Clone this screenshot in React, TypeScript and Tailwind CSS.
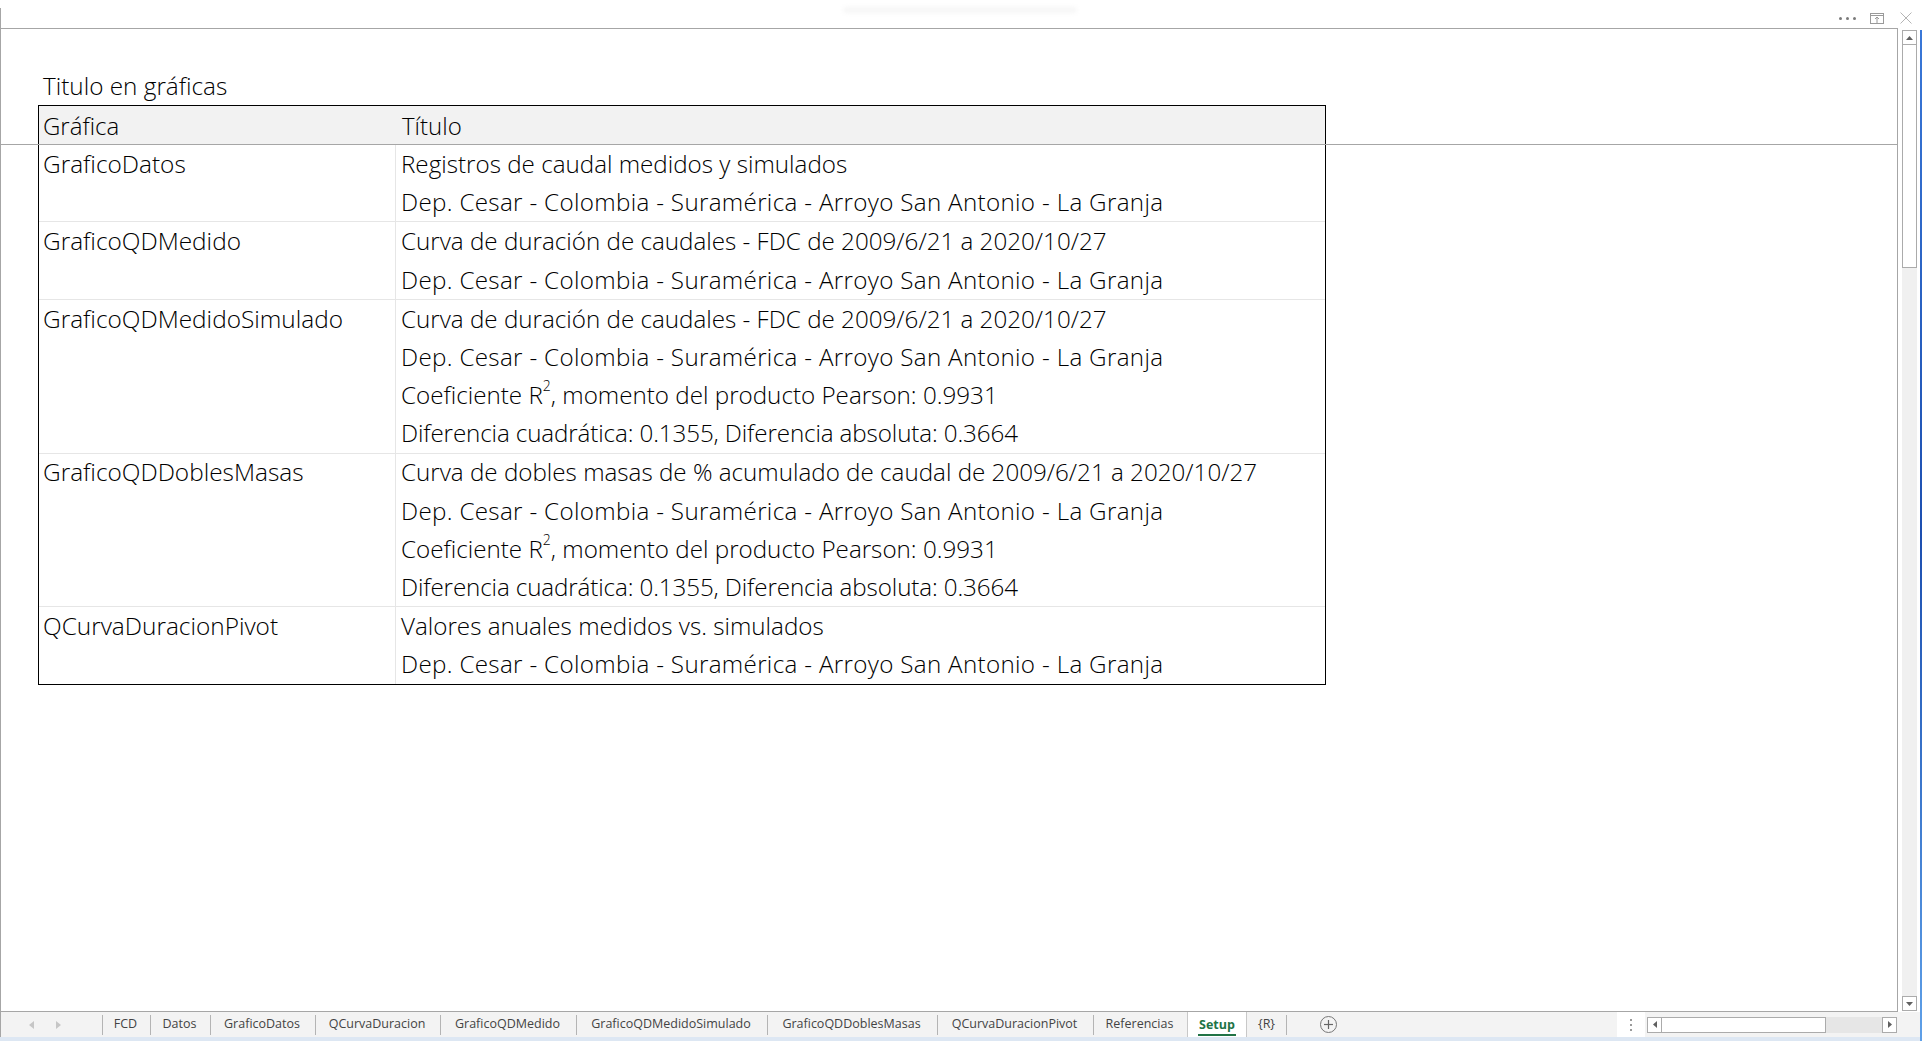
import React from "react";

const DEP = (
  <span className="tracking-[0.32px]">Dep. Cesar - Colombia - Suramérica - Arroyo San Antonio - La Granja</span>
);

const R2 = (
  <>
    Coeficiente R<sup className="text-[14px] top-[-9px]">2</sup>, momento del producto Pearson: 0.9931
  </>
);

const DIF = (
  <span className="tracking-[-0.12px]">Diferencia cuadrática: 0.1355, Diferencia absoluta: 0.3664</span>
);

const rows: { name: string; lines: React.ReactNode[] }[] = [
  { name: "GraficoDatos", lines: ["Registros de caudal medidos y simulados", DEP] },
  {
    name: "GraficoQDMedido",
    lines: ["Curva de duración de caudales - FDC de 2009/6/21 a 2020/10/27", DEP],
  },
  {
    name: "GraficoQDMedidoSimulado",
    lines: ["Curva de duración de caudales - FDC de 2009/6/21 a 2020/10/27", DEP, R2, DIF],
  },
  {
    name: "GraficoQDDoblesMasas",
    lines: [
      "Curva de dobles masas de % acumulado de caudal de 2009/6/21 a 2020/10/27",
      DEP,
      R2,
      DIF,
    ],
  },
  { name: "QCurvaDuracionPivot", lines: ["Valores anuales medidos vs. simulados", DEP] },
];

const tabs = [
  { label: "FCD", w: "w-[48px]" },
  { label: "Datos", w: "w-[60px]" },
  { label: "GraficoDatos", w: "w-[105px]" },
  { label: "QCurvaDuracion", w: "w-[125px]" },
  { label: "GraficoQDMedido", w: "w-[136px]" },
  { label: "GraficoQDMedidoSimulado", w: "w-[191px]" },
  { label: "GraficoQDDoblesMasas", w: "w-[170px]" },
  { label: "QCurvaDuracionPivot", w: "w-[156px]" },
  { label: "Referencias", w: "w-[94px]" },
];

const App = () => {
  return (
    <div className="w-[1922px] h-[1041px] bg-white flex overflow-hidden relative font-['Open_Sans',sans-serif] text-black">
      {/* faint title shadow */}
      <div className="absolute left-[843px] top-[7px] w-[234px] h-[6px] bg-[#f6f6f6] blur-[2px] rounded-full" />

      <div className="w-[1920px] flex flex-col">
        <div className="h-[8px]" />
        <div className="flex-1 flex flex-col border-l border-[#a6a6a6]">
          {/* Window controls */}
          <div className="h-[20px] flex items-center justify-end">
            <div className="flex gap-[4px] mr-[14px]">
              <span className="w-[3px] h-[3px] bg-[#7a7a7a] rounded-full" />
              <span className="w-[3px] h-[3px] bg-[#7a7a7a] rounded-full" />
              <span className="w-[3px] h-[3px] bg-[#7a7a7a] rounded-full" />
            </div>
            <svg width="14" height="11" viewBox="0 0 14 11" className="mr-[16px]" fill="none" stroke="#9a9a9a" strokeWidth="1">
              <rect x="0.5" y="0.5" width="13" height="10" />
              <line x1="0.5" y1="2.5" x2="13.5" y2="2.5" />
              <line x1="7" y1="4" x2="7" y2="10" />
              <polyline points="5,6 7,4 9,6" />
            </svg>
            <svg width="12" height="12" viewBox="0 0 12 12" className="mr-[8px]" stroke="#b4b4b4" strokeWidth="1">
              <line x1="0.5" y1="0.5" x2="11.5" y2="11.5" />
              <line x1="11.5" y1="0.5" x2="0.5" y2="11.5" />
            </svg>
          </div>

          {/* Sheet + vertical scrollbar */}
          <div className="h-[984px] flex">
            <div className="w-[1898px] h-full border-t border-r border-b border-[#a6a6a6] relative">
              {/* freeze pane line */}
              <div className="absolute left-0 right-0 top-[115px] h-px bg-[#a6a6a6] z-10" />
              <div className="pt-[38px] pl-[37px] font-light">
                <div className="h-[38px] flex items-center pl-[5px] text-[24.3px]">Titulo en gráficas</div>
                <div className="w-[1288px] border border-black text-[24px]">
                  <div className="h-[39px] bg-[#f2f2f2] flex items-center">
                    <div className="w-[357px] pl-[4px]">Gráfica</div>
                    <div className="pl-[6px]">Título</div>
                  </div>
                  {rows.map((r, i) => (
                    <div key={r.name} className={`flex ${i > 0 ? "border-t border-[#e6e6e6]" : ""}`}>
                      <div className="w-[357px] pl-[4px] border-r border-[#e6e6e6] text-[24.4px]">
                        <div className="h-[38.2px] flex items-center">{r.name}</div>
                      </div>
                      <div className="flex-1 pl-[5px] text-[24.2px]">
                        {r.lines.map((l, j) => (
                          <div key={j} className="h-[38.2px] flex items-center whitespace-nowrap">
                            {l}
                          </div>
                        ))}
                      </div>
                    </div>
                  ))}
                </div>
              </div>
            </div>

            {/* vertical scrollbar */}
            <div className="w-[22px] pl-[4px] pt-[2px] pb-[1px] flex">
              <div className="w-[15px] flex flex-col bg-[#f0f0f0]">
                <div className="h-[15px] border border-[#ababab] bg-white flex items-center justify-center">
                  <svg width="7" height="4" viewBox="0 0 7 4"><polygon points="0,4 3.5,0 7,4" fill="#606060" /></svg>
                </div>
                <div className="h-[223px] border border-t-0 border-[#ababab] bg-white" />
                <div className="flex-1" />
                <div className="h-[15px] border border-[#ababab] bg-white flex items-center justify-center">
                  <svg width="7" height="4" viewBox="0 0 7 4"><polygon points="0,0 7,0 3.5,4" fill="#606060" /></svg>
                </div>
              </div>
            </div>
          </div>

          {/* Sheet tabs */}
          <div className="h-[25px] bg-[#f3f3f3] flex items-center text-[12.5px] text-[#444]">
            <div className="w-[101px] h-full flex items-center pl-[28px] gap-[22px] text-[#c2c2c2]">
              <svg width="5" height="8" viewBox="0 0 5 8"><polygon points="5,0 0,4 5,8" fill="#c6c6c6" /></svg>
              <svg width="5" height="8" viewBox="0 0 5 8"><polygon points="0,0 5,4 0,8" fill="#c6c6c6" /></svg>
            </div>
            {tabs.map((t) => (
              <div key={t.label} className={`${t.w} h-full flex items-center`}>
                <span className="w-px h-[20px] bg-[#b4b4b4]" />
                <span className="flex-1 text-center pr-[2px] whitespace-nowrap">{t.label}</span>
              </div>
            ))}
            <div className="w-[60px] h-full flex items-center bg-white border-l border-r border-[#c8c8c8]">
              <span className="flex-1 h-full flex flex-col items-center justify-center">
                <span className="font-bold text-[#217346] leading-[18px] border-b-2 border-[#217346] px-[1px] mt-[3px]">Setup</span>
              </span>
            </div>
            <div className="w-[40px] h-full flex items-center">
              <span className="flex-1 text-center">{"{R}"}</span>
              <span className="w-px h-[20px] bg-[#b4b4b4]" />
            </div>
            <div className="ml-[33px] w-[17px] h-[17px] rounded-full border border-[#777] flex items-center justify-center">
              <svg width="9" height="9" viewBox="0 0 9 9" stroke="#666" strokeWidth="1.2">
                <line x1="4.5" y1="0" x2="4.5" y2="9" />
                <line x1="0" y1="4.5" x2="9" y2="4.5" />
              </svg>
            </div>
            <div className="flex-1" />
            <div className="w-[28px] h-full bg-white flex flex-col items-center justify-center gap-[3px]">
              <span className="w-[2px] h-[2px] bg-[#9a9a9a]" />
              <span className="w-[2px] h-[2px] bg-[#9a9a9a]" />
              <span className="w-[2px] h-[2px] bg-[#9a9a9a]" />
            </div>
            {/* horizontal scrollbar */}
            <div className="ml-[2px] w-[250px] h-[16px] flex">
              <div className="w-[15px] h-full border border-[#ababab] bg-white flex items-center justify-center">
                <svg width="4" height="7" viewBox="0 0 4 7"><polygon points="4,0 0,3.5 4,7" fill="#606060" /></svg>
              </div>
              <div className="w-[164px] h-full border border-l-0 border-[#ababab] bg-white" />
              <div className="flex-1 h-full bg-[#e6e6e6]" />
              <div className="w-[15px] h-full border border-[#ababab] bg-white flex items-center justify-center">
                <svg width="4" height="7" viewBox="0 0 4 7"><polygon points="0,0 4,3.5 0,7" fill="#606060" /></svg>
              </div>
            </div>
            <div className="w-[23px]" />
          </div>
        </div>
        <div className="h-[4px] bg-[#dde7f3]" />
      </div>
      {/* desktop edge */}
      <div className="w-[2px] mt-[30px] bg-gradient-to-b from-[#3a78d8] via-[#1d4fb0] to-[#5fa0e8]" />
    </div>
  );
};

export default App;
